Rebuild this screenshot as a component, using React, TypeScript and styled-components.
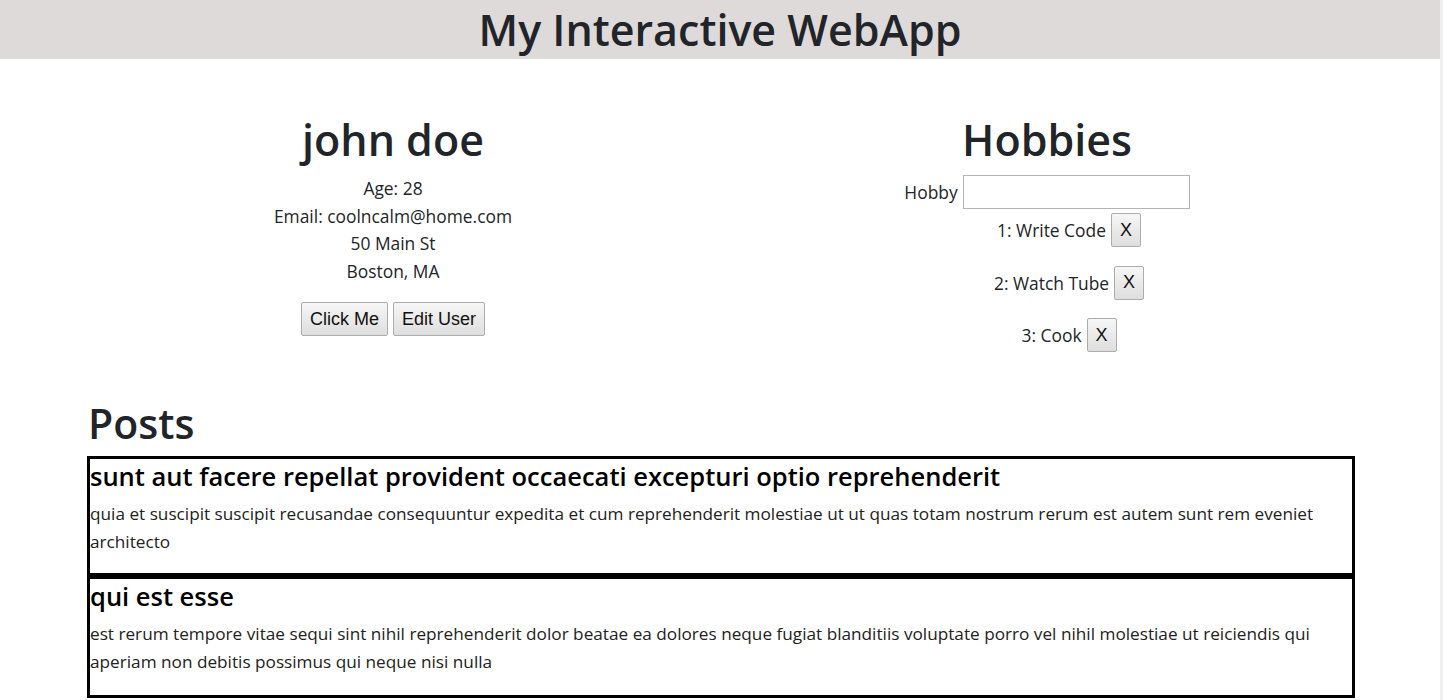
import styled, { createGlobalStyle } from "styled-components";

const GlobalStyle = createGlobalStyle`
  html, body {
    margin: 0;
    padding: 0;
    background: #fff;
    overflow: hidden;
  }
  body {
    font-family: "Open Sans", "Liberation Sans", sans-serif;
    color: #212529;
  }
`;

const Page = styled.div`
  width: 1440px;
  min-height: 700px;
  border-right: 3px solid #f0f0f0;
`;

const Header = styled.header`
  height: 59px;
  background-color: #dedad9;
  display: flex;
  justify-content: center;
  align-items: center;
`;

const AppTitle = styled.h1`
  margin: 0;
  font-size: 43px;
  font-weight: 600;
  line-height: 1;
`;

const Top = styled.div`
  display: grid;
  grid-template-columns: 654px 654px;
  padding: 52px 66px 0;
`;

const Column = styled.section`
  display: flex;
  flex-direction: column;
  align-items: center;
`;

const Name = styled.h2`
  margin: 0 0 6px;
  font-size: 43px;
  font-weight: 600;
  line-height: 58px;
`;

const InfoLine = styled.div`
  font-size: 17.4px;
  line-height: 27.5px;
`;

const ButtonRow = styled.div`
  display: flex;
  gap: 5px;
  margin-top: 17px;
`;

const Button = styled.button`
  font-family: "Liberation Sans", Arial, sans-serif;
  font-size: 18px;
  height: 34px;
  padding: 0 8px;
  color: #111;
  background: linear-gradient(#f6f6f6, #dedede);
  border: 1px solid #adadad;
  border-radius: 2px;
  cursor: pointer;
`;

const HobbyForm = styled.label`
  display: flex;
  align-items: center;
  gap: 5px;
  font-size: 17.4px;
`;

const HobbyInput = styled.input`
  width: 227px;
  height: 34px;
  box-sizing: border-box;
  border: 1px solid #b4b4b4;
  font-size: 16px;
`;

const HobbyList = styled.ul`
  display: flex;
  flex-direction: column;
  align-items: center;
  gap: 18.5px;
  list-style: none;
  margin: 4px 0 0;
  padding: 0 0 0 44px;
`;

const HobbyItem = styled.li`
  display: flex;
  align-items: center;
  gap: 5px;
  font-size: 17.4px;
`;

const Posts = styled.section`
  margin: 47px 85px 0 87px;
`;

const PostsTitle = styled.h2`
  margin: 0 0 9px 1px;
  font-size: 41px;
  font-weight: 600;
  line-height: 48px;
`;

const PostCard = styled.article`
  border: 3px solid #000;
  padding: 1px 0 18px;

  & + & {
    padding-bottom: 20px;
  }
`;

const PostTitle = styled.h3`
  margin: 0 0 8px;
  font-size: 25.5px;
  font-weight: 600;
  line-height: 32px;
  color: #000;
`;

const PostBody = styled.p`
  margin: 0;
  font-size: 17.2px;
  line-height: 27.5px;
  color: #222;
`;

type User = {
  name: string;
  age: number;
  email: string;
  street: string;
  city: string;
};

type Post = {
  id: number;
  title: string;
  body: string;
};

const user: User = {
  name: "john doe",
  age: 28,
  email: "coolncalm@home.com",
  street: "50 Main St",
  city: "Boston, MA",
};

const hobbies = ["Write Code", "Watch Tube", "Cook"];

const posts: Post[] = [
  {
    id: 1,
    title:
      "sunt aut facere repellat provident occaecati excepturi optio reprehenderit",
    body: "quia et suscipit suscipit recusandae consequuntur expedita et cum reprehenderit molestiae ut ut quas totam nostrum rerum est autem sunt rem eveniet architecto",
  },
  {
    id: 2,
    title: "qui est esse",
    body: "est rerum tempore vitae sequi sint nihil reprehenderit dolor beatae ea dolores neque fugiat blanditiis voluptate porro vel nihil molestiae ut reiciendis qui aperiam non debitis possimus qui neque nisi nulla",
  },
];

export default function App() {
  return (
    <Page>
      <GlobalStyle />
      <Header>
        <AppTitle>My Interactive WebApp</AppTitle>
      </Header>

      <Top>
        <Column>
          <Name>{user.name}</Name>
          <InfoLine>Age: {user.age}</InfoLine>
          <InfoLine>Email: {user.email}</InfoLine>
          <InfoLine>{user.street}</InfoLine>
          <InfoLine>{user.city}</InfoLine>
          <ButtonRow>
            <Button>Click Me</Button>
            <Button>Edit User</Button>
          </ButtonRow>
        </Column>

        <Column>
          <Name>Hobbies</Name>
          <HobbyForm>
            Hobby
            <HobbyInput type="text" />
          </HobbyForm>
          <HobbyList>
            {hobbies.map((hobby, i) => (
              <HobbyItem key={hobby}>
                {i + 1}: {hobby}
                <Button>X</Button>
              </HobbyItem>
            ))}
          </HobbyList>
        </Column>
      </Top>

      <Posts>
        <PostsTitle>Posts</PostsTitle>
        {posts.map((post) => (
          <PostCard key={post.id}>
            <PostTitle>{post.title}</PostTitle>
            <PostBody>{post.body}</PostBody>
          </PostCard>
        ))}
      </Posts>
    </Page>
  );
}
